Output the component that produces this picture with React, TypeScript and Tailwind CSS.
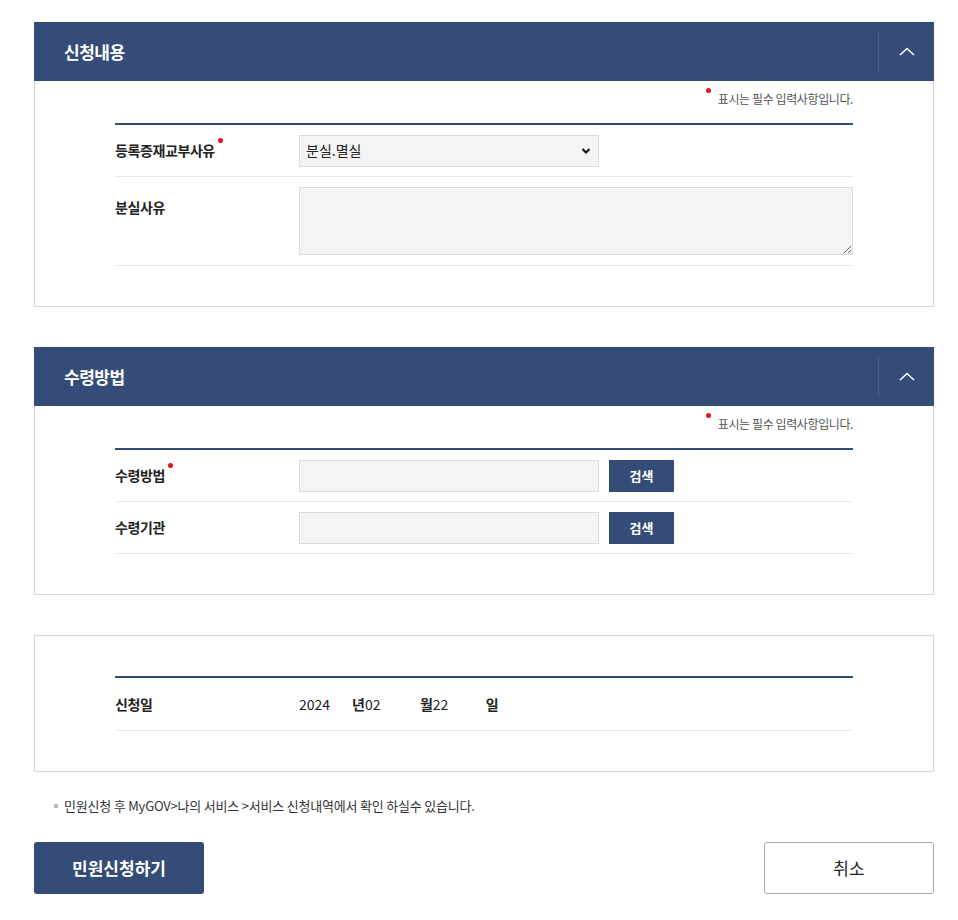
import React from "react";

const font = { fontFamily: '"Noto Sans CJK KR", "Noto Sans", sans-serif' };

function Header({ title }: { title: string }) {
  return (
    <div className="flex h-[59px] items-center bg-[#344c77]">
      <h2 className="flex-1 pl-[30px] text-[17px] font-bold tracking-[-0.5px] text-white">{title}</h2>
      <div className="h-[40px] w-px bg-[#4a6089]" />
      <button className="flex h-full w-[55px] items-center justify-center text-white">
        <svg width="16" height="9" viewBox="0 0 16 9" fill="none">
          <path d="M1 8L8 1.5L15 8" stroke="white" strokeWidth="1.6" />
        </svg>
      </button>
    </div>
  );
}

function Required() {
  return (
    <div className="flex h-[42px] items-start justify-end pt-[9px] text-[12px] tracking-[-0.4px] text-[#555]">
      <span className="relative mr-[7px] -mt-[2px] inline-block h-[5px] w-[5px] rounded-full bg-[#e0141e]" />
      <span>표시는 필수 입력사항입니다.</span>
    </div>
  );
}

function Label({ text, req }: { text: string; req?: boolean }) {
  return (
    <div className="w-[184px] shrink-0 text-[14px] font-bold tracking-[-0.4px] text-[#222]">
      <span className="relative">
        {text}
        {req && <span className="absolute -right-[8px] -top-[2px] h-[5px] w-[5px] rounded-full bg-[#e0141e]" />}
      </span>
    </div>
  );
}

function SearchRow({ label, req }: { label: string; req?: boolean }) {
  return (
    <div className="flex h-[52px] items-center border-b border-[#e8e8e8]">
      <Label text={label} req={req} />
      <input className="h-[32px] w-[300px] border border-[#dcdcdc] bg-[#f4f4f4] px-2 text-[14px]" />
      <button className="ml-[10px] h-[32px] w-[65px] bg-[#344c77] text-[13px] font-bold text-white">검색</button>
    </div>
  );
}

export default function App() {
  return (
    <div className="min-h-screen bg-white pl-[34px] pr-[24px] pt-[22px] pb-[26px]" style={font}>
      {/* 신청내용 */}
      <section>
        <Header title="신청내용" />
        <div className="border border-t-0 border-[#d6d6d6] px-[80px] pb-[40px]">
          <Required />
          <div className="border-t-2 border-[#344c77]">
            <div className="flex h-[52px] items-center border-b border-[#e8e8e8]">
              <Label text="등록증재교부사유" req />
              <div className="relative">
                <select className="h-[32px] w-[300px] appearance-none border border-[#dcdcdc] bg-[#f4f4f4] pl-[6px] text-[14px] text-[#222]">
                  <option>분실.멸실</option>
                </select>
                <svg className="pointer-events-none absolute right-[8px] top-[12px]" width="10" height="8" viewBox="0 0 10 8">
                  <path d="M1.5 2L5 5.5L8.5 2" stroke="#111" strokeWidth="2" fill="none" />
                </svg>
              </div>
            </div>
            <div className="flex h-[89px] items-start border-b border-[#e8e8e8] pt-[10px]">
              <div className="pt-[10px]">
                <Label text="분실사유" />
              </div>
              <textarea className="h-[68px] flex-1 border border-[#dcdcdc] bg-[#f4f4f4]" />
            </div>
          </div>
        </div>
      </section>

      {/* 수령방법 */}
      <section className="mt-[40px]">
        <Header title="수령방법" />
        <div className="border border-t-0 border-[#d6d6d6] px-[80px] pb-[40px]">
          <Required />
          <div className="border-t-2 border-[#344c77]">
            <SearchRow label="수령방법" req />
            <SearchRow label="수령기관" />
          </div>
        </div>
      </section>

      {/* 신청일 */}
      <section className="mt-[40px] border border-[#d6d6d6] px-[80px] pt-[40px] pb-[40px]">
        <div className="border-t-2 border-[#344c77]">
          <div className="flex h-[53px] items-center border-b border-[#e8e8e8] text-[14px] text-[#222]">
            <Label text="신청일" />
            <span className="w-[53px]">2024</span>
            <span className="font-bold">년</span>
            <span className="w-[55px]">02</span>
            <span className="font-bold">월</span>
            <span className="w-[53px]">22</span>
            <span className="font-bold">일</span>
          </div>
        </div>
      </section>

      <p className="mt-[24px] flex items-center pl-[20px] text-[13px] tracking-[-0.2px] text-[#333]">
        <span className="mr-[6px] inline-block h-[4px] w-[4px] bg-[#bbb]" />
        민원신청 후 MyGOV&gt;나의 서비스 &gt;서비스 신청내역에서 확인 하실수 있습니다.
      </p>

      <div className="mt-[26px] flex justify-between">
        <button className="h-[52px] w-[170px] rounded-[3px] bg-[#344c77] text-[17px] font-bold text-white">민원신청하기</button>
        <button className="h-[52px] w-[170px] rounded-[3px] border border-[#a8a8a8] bg-white text-[17px] text-[#222]">취소</button>
      </div>
    </div>
  );
}
